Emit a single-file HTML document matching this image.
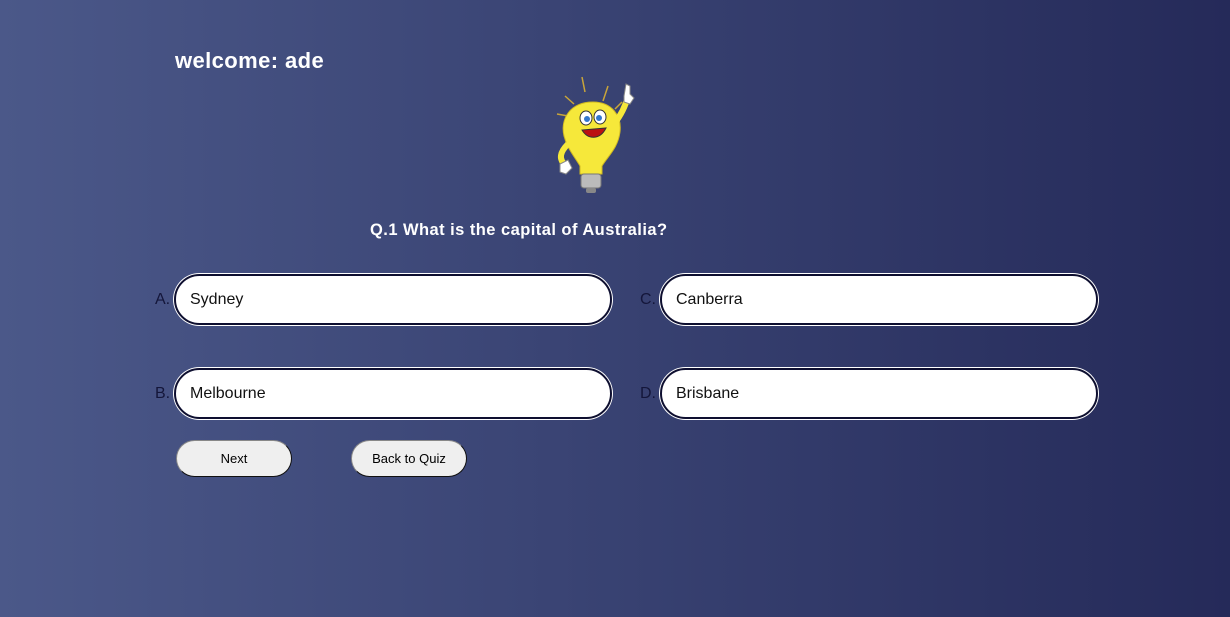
<!DOCTYPE html>
<html><head><style>
body{margin:0;width:1230px;height:617px;overflow:hidden;background:linear-gradient(to right,#4b5889,#3a4474 45%,#252a59);font-family:"Liberation Sans",Arial,sans-serif;position:relative}
.w{position:absolute;left:175px;top:48px;color:#fff;font-weight:bold;font-size:22px;letter-spacing:0.4px}
.q{position:absolute;left:370px;top:221px;color:#fff;font-weight:bold;font-size:16.5px;letter-spacing:0.45px}
.lab{position:absolute;color:#14163a;font-size:16px}
.box{position:absolute;width:438px;height:51px;border-radius:27px;background:#fff;border:2px solid #0e0f30;box-shadow:0 0 0 1px #fff;box-sizing:border-box;padding-left:14px;line-height:47px;font-size:16px;color:#111}
.btn{position:absolute;top:440px;width:116px;height:37px;border-radius:19px;background:#efefef;border:1px solid #888;border-right:1px solid #111;border-bottom:1px solid #111;box-sizing:border-box;text-align:center;line-height:35px;font-size:13px;color:#000}
</style></head><body>
<div class="w">welcome: ade</div>
<svg style="position:absolute;left:540px;top:74px" width="110" height="125" viewBox="0 0 110 125">
<g stroke="#c9a53a" stroke-width="1.5"><line x1="42" y1="3" x2="45" y2="18"/><line x1="25" y1="22" x2="34" y2="30"/><line x1="17" y1="40" x2="28" y2="42"/><line x1="68" y1="12" x2="63" y2="27"/><line x1="82" y1="28" x2="75" y2="35"/></g>
<path d="M53 28 C30 28 20 45 24 62 C27 74 34 82 40 92 L40 100 L62 100 L62 92 C68 82 78 74 80 58 C82 42 72 28 53 28Z" fill="#f6e83a" stroke="#d0b820"/>
<path d="M74 50 C82 40 86 30 88 22" stroke="#f6e83a" stroke-width="6" fill="none"/>
<path d="M84 22 L86 10 L90 12 L90 20 L94 24 L90 30 L84 28Z" fill="#fff" stroke="#888"/>
<path d="M28 70 C20 78 18 85 26 92" stroke="#f6e83a" stroke-width="6" fill="none"/>
<path d="M20 90 L28 86 L32 94 L26 100 L20 98Z" fill="#fff" stroke="#888"/>
<ellipse cx="46" cy="44" rx="6" ry="7" fill="#fff" stroke="#333"/><ellipse cx="60" cy="43" rx="6" ry="7" fill="#fff" stroke="#333"/>
<circle cx="47" cy="45" r="3" fill="#3377cc"/><circle cx="59" cy="44" r="3" fill="#3377cc"/>
<path d="M42 56 C48 66 60 66 66 54 Z" fill="#b11" stroke="#333"/>
<rect x="41" y="100" width="20" height="14" rx="3" fill="#bbb" stroke="#777"/>
<rect x="46" y="114" width="10" height="5" rx="2" fill="#888"/>
</svg>
<div class="q">Q.1 What is the capital of Australia?</div>
<div class="lab" style="left:155px;top:291px">A.</div>
<div class="box" style="left:174px;top:274px">Sydney</div>
<div class="lab" style="left:155px;top:385px">B.</div>
<div class="box" style="left:174px;top:368px">Melbourne</div>
<div class="lab" style="left:640px;top:291px">C.</div>
<div class="box" style="left:660px;top:274px">Canberra</div>
<div class="lab" style="left:640px;top:385px">D.</div>
<div class="box" style="left:660px;top:368px">Brisbane</div>
<div class="btn" style="left:176px">Next</div>
<div class="btn" style="left:351px">Back to Quiz</div>
</body></html>
